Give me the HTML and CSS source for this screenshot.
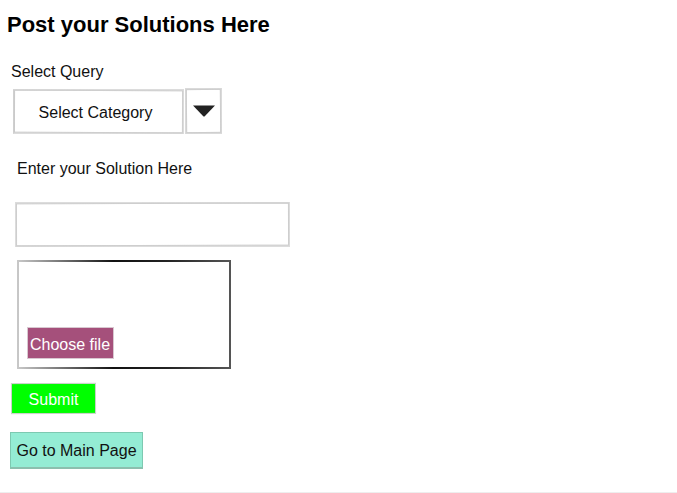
FILE: index.html
```html
<!DOCTYPE html>
<html lang="en">
<head>
<meta charset="utf-8">
<title>Post your Solutions Here</title>
<link rel="stylesheet" href="styles.css">
</head>
<body>
<main class="page">
  <h2 class="title">Post your Solutions Here</h2>
  <p class="label label-query">Select Query</p>
  <div class="select-row">
    <div class="select-box sketch">Select Category</div>
    <div class="select-arrow sketch">
      <svg width="24" height="13" viewBox="0 0 24 13" aria-hidden="true">
        <path d="M1 1.5 L23 1.5 L13 12 Q12 13 11 12 Z" fill="#222"/>
      </svg>
    </div>
  </div>
  <p class="label label-solution">Enter your Solution Here</p>
  <div class="text-input sketch"></div>
  <div class="file-box">
    <span class="choose-btn">Choose file</span>
  </div>
  <button class="btn btn-submit sketch">Submit</button>
  <button class="btn btn-main">Go to Main Page</button>
</main>
<footer class="footer-line"></footer>
</body>
</html>
```
FILE: styles.css
```css
html, body {
  margin: 0;
  padding: 0;
  background: #ffffff;
}

body {
  font-family: "Liberation Sans", Arial, sans-serif;
  font-size: 16px;
  line-height: 18px;
  color: #111;
  overflow: hidden;
}

.page {
  display: flex;
  flex-direction: column;
  align-items: flex-start;
}

.title {
  margin: 12px 0 0 7px;
  font-size: 22px;
  line-height: 25px;
  font-weight: bold;
  color: #000;
}

.label {
  margin: 0;
  color: #111;
}

.label-query {
  margin: 26px 0 0 11px;
}

.select-row {
  display: flex;
  margin: 8px 0 0 13px;
}

.sketch {
  position: relative;
}

.sketch::after {
  content: "";
  position: absolute;
  inset: -1px;
  border: 1px solid rgba(200, 200, 200, 0.7);
  transform: rotate(0.35deg);
  pointer-events: none;
}

.select-box {
  box-sizing: border-box;
  width: 171px;
  height: 45px;
  border: 2px solid #dcdcdc;
  border-left-color: #d0d0d0;
  display: flex;
  align-items: center;
  justify-content: center;
  padding: 2px 6px 0 0;
  color: #111;
}

.select-arrow {
  box-sizing: border-box;
  width: 37px;
  height: 46px;
  margin: -1px 0 0 1px;
  border: 2px solid #dadada;
  display: flex;
  align-items: center;
  justify-content: center;
  padding-bottom: 2px;
}

.select-arrow::after {
  transform: rotate(-0.8deg);
}

.label-solution {
  margin: 26px 0 0 17px;
}

.text-input {
  box-sizing: border-box;
  width: 275px;
  height: 45px;
  margin: 24px 0 0 15px;
  border: 2px solid #dcdcdc;
}

.text-input::after {
  transform: rotate(-0.25deg);
}

.file-box {
  box-sizing: border-box;
  width: 214px;
  height: 109px;
  margin: 13px 0 0 17px;
  border: 2px solid #666;
  border-image: linear-gradient(to right, #c8c8c8, #111 45%, #222 70%, #555) 1;
  display: flex;
  flex-direction: column;
  justify-content: flex-end;
  align-items: flex-start;
  padding: 0 0 8px 8px;
}

.choose-btn {
  box-sizing: border-box;
  height: 32px;
  padding: 8px 3px 0 2px;
  background: #a5507b;
  border: 1px solid #d8c8d0;
  color: #fff;
}

.btn {
  font-family: "Liberation Sans", Arial, sans-serif;
  font-size: 16px;
  line-height: 18px;
  cursor: pointer;
  box-sizing: border-box;
  padding: 0;
}

.btn-submit {
  width: 85px;
  height: 31px;
  margin: 14px 0 0 11px;
  background: #00ff00;
  border: 1px solid #d8e8d8;
  color: #fff;
  padding-top: 2px;
}

.btn-submit::after {
  border-color: rgba(190, 190, 190, 0.6);
  transform: rotate(-0.5deg);
}

.btn-main {
  width: 133px;
  height: 37px;
  margin: 18px 0 0 10px;
  background: #94ecd4;
  border: 1px solid #7dc9b1;
  border-bottom: 2px solid #8cbfae;
  color: #111;
  padding-top: 2px;
}

.footer-line {
  margin-top: 23px;
  border-top: 1px solid #eeeeee;
}
```
